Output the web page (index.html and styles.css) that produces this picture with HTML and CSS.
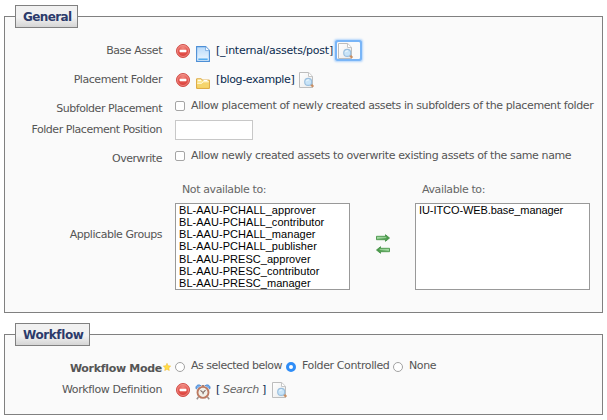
FILE: index.html
```html
<!DOCTYPE html>
<html lang="en">
<head>
<meta charset="utf-8">
<title>Asset Factory</title>
<link rel="stylesheet" href="styles.css">
</head>
<body>
<svg width="0" height="0" class="defs" aria-hidden="true">
  <defs>
    <radialGradient id="red" cx=".5" cy=".25" r=".8"><stop offset="0" stop-color="#f08a80"/><stop offset=".55" stop-color="#e2504a"/><stop offset="1" stop-color="#d3342f"/></radialGradient>
    <linearGradient id="blue" x2="0" y2="1"><stop offset="0" stop-color="#b9dafa"/><stop offset="1" stop-color="#eef8ff"/></linearGradient>
    <linearGradient id="gold" x2="0" y2="1"><stop offset="0" stop-color="#fff4b0"/><stop offset="1" stop-color="#f3c94b"/></linearGradient>
    <linearGradient id="paper" x2="1" y2="1"><stop offset="0" stop-color="#fff"/><stop offset="1" stop-color="#eaeaea"/></linearGradient>
    <linearGradient id="green" x2="1"><stop offset="0" stop-color="#9bd59b"/><stop offset="1" stop-color="#398d3a"/></linearGradient>
    <symbol id="minus" viewBox="0 0 14 14"><circle cx="7" cy="7" r="6.5" fill="url(#red)" stroke="#d0504a"/><circle cx="7" cy="7" r="5.5" fill="none" stroke="#f5a49c" stroke-width=".7"/><rect x="3.6" y="5.7" width="6.8" height="2.5" rx=".4" fill="#fff"/></symbol>
    <symbol id="page" viewBox="0 0 14 16"><path d="M.6.6h9.1l3.7 3.8v11H.6z" fill="url(#blue)" stroke="#4d8fd6" stroke-width="1.1"/><path d="M9.6.8v3.8h3.7" fill="#fff" stroke="#6ba5e0" stroke-width=".8"/><path d="M2.3 13.2h9.4" stroke="#45a5ef" stroke-width="1.4"/></symbol>
    <symbol id="folder" viewBox="0 0 14 12"><path d="M.6 11.4V1.8h4.7l1 1.3h7.1v8.3z" fill="url(#gold)" stroke="#dca63b"/><path d="M1.4 6.5h4.4l1.2-1.7h5.8v6H1.4z" fill="#f5d56c"/><path d="M1.2 6.3h4.6L7 4.8h5.7" fill="none" stroke="#fff9df"/><path d="M2 3.3h3M7.5 3.5h4" stroke="#fff"/></symbol>
    <symbol id="find" viewBox="0 0 16 16"><path d="M.5.5h9.2l3.8 3.8v11.2H.5z" fill="url(#paper)" stroke="#bdbdbd"/><path d="M9.5.7v3.8h3.8" fill="#fff" stroke="#c6c6c6"/><path d="M11.8 12.4l2.5 2.3" stroke="#c98e62" stroke-width="2.2"/><circle cx="9.2" cy="9.9" r="3.5" fill="#c8e4f8" stroke="#9abfde" stroke-width="1.1"/><path d="M7.3 9.3q.8-1.8 2.5-1.4" fill="none" stroke="#f5fcff"/></symbol>
    <symbol id="clock" viewBox="0 0 16 16"><path d="M3.5 13l-1.7 2.3M12.5 13l1.7 2.3" stroke="#99908c" stroke-width="1.5"/><path d="M1.4 5.2C-.2 2 3.2-.3 5.9 1.7M14.6 5.2C16.2 2 12.8-.3 10.1 1.7" fill="#78aeeb" stroke="#4385d3"/><path d="M6.6 1.8h2.8" stroke="#9c796b" stroke-width="1.5"/><circle cx="8" cy="8.4" r="5.5" fill="#f1f0e9" stroke="#bc7960" stroke-width="1.9"/><path d="M5.5 6.4l2.6 2.2 2.4-2.4M8.1 8.6v1.6" fill="none" stroke="#7c665f" stroke-width="1.1"/></symbol>
    <symbol id="arrow" viewBox="0 0 14 8"><path d="M.5 2.3h9V.7L13.5 4 9.5 7.3V5.7h-9z" fill="url(#green)" stroke="#479448" stroke-width=".9"/><path d="M1.3 3.4h9" stroke="#b5e3b0" stroke-width=".7"/></symbol>
    <symbol id="star" viewBox="0 0 8 8"><path d="M4 .3l1.1 2.4 2.6.4-1.9 1.8.5 2.7L4 6.3 1.7 7.6l.5-2.7L.3 3.1l2.6-.4z" fill="#ffdc45" stroke="#efb62d" stroke-width=".5"/></symbol>
  </defs>
</svg>

<fieldset class="panel general">
  <legend>General</legend>
  <div class="row asset">
    <span class="label">Base Asset</span>
    <div class="control">
      <svg class="minus"><use href="#minus"/></svg>
      <svg class="page"><use href="#page"/></svg>
      <span class="path base">[_internal/assets/post]</span>
      <span class="picker focused"><svg class="find"><use href="#find"/></svg></span>
    </div>
  </div>
  <div class="row asset">
    <span class="label">Placement Folder</span>
    <div class="control">
      <svg class="minus"><use href="#minus"/></svg>
      <svg class="folder"><use href="#folder"/></svg>
      <span class="path">[blog-example]</span>
      <span class="picker"><svg class="find"><use href="#find"/></svg></span>
    </div>
  </div>
  <div class="row sub">
    <span class="label">Subfolder Placement</span>
    <label class="control check"><input type="checkbox"><span>Allow placement of newly created assets in subfolders of the placement folder</span></label>
  </div>
  <div class="row position">
    <span class="label">Folder Placement Position</span>
    <div class="control"><input type="text" class="field"></div>
  </div>
  <div class="row overwrite">
    <span class="label">Overwrite</span>
    <label class="control check"><input type="checkbox"><span>Allow newly created assets to overwrite existing assets of the same name</span></label>
  </div>
  <div class="row groups">
    <span class="label">Applicable Groups</span>
    <div class="lists">
      <div class="list">
        <div class="heading">Not available to:</div>
        <ul>
          <li>BL-AAU-PCHALL_approver</li>
          <li>BL-AAU-PCHALL_contributor</li>
          <li>BL-AAU-PCHALL_manager</li>
          <li>BL-AAU-PCHALL_publisher</li>
          <li>BL-AAU-PRESC_approver</li>
          <li>BL-AAU-PRESC_contributor</li>
          <li>BL-AAU-PRESC_manager</li>
        </ul>
      </div>
      <div class="arrows">
        <svg><use href="#arrow"/></svg>
        <svg class="back"><use href="#arrow"/></svg>
      </div>
      <div class="list">
        <div class="heading">Available to:</div>
        <ul class="available"><li>IU-ITCO-WEB.base_manager</li></ul>
      </div>
    </div>
  </div>
</fieldset>

<fieldset class="panel workflow">
  <legend>Workflow</legend>
  <div class="row mode">
    <span class="label strong">Workflow Mode</span>
    <svg class="star"><use href="#star"/></svg>
    <div class="control radios">
      <label class="below"><input type="radio" name="mode"><span>As selected below</span></label>
      <label class="controlled"><input type="radio" name="mode" checked><span>Folder Controlled</span></label>
      <label><input type="radio" name="mode"><span>None</span></label>
    </div>
  </div>
  <div class="row definition">
    <span class="label">Workflow Definition</span>
    <div class="control">
      <svg class="minus"><use href="#minus"/></svg>
      <svg class="clock"><use href="#clock"/></svg>
      <span class="path search">[ <em>Search</em> ]</span>
      <span class="picker"><svg class="find"><use href="#find"/></svg></span>
    </div>
  </div>
</fieldset>
</body>
</html>
```

FILE: styles.css
```css
* { box-sizing: border-box; }
body {
  margin: 0;
  padding: 5px 4px 0;
  background: #fff;
  color: #555;
  font: 11px/14px "DejaVu Sans", Verdana, sans-serif;
  letter-spacing: -.39px;
}
svg { display: block; flex: none; }
.defs { position: absolute; }

.panel {
  width: 599px;
  min-width: 0;
  margin: 0 0 10px;
  padding: 8px 0 0;
  border: 1px solid #808080;
  background: #fafafa;
}
.general { height: 308px; }
.workflow { height: 92px; }
legend {
  height: 23px;
  margin-left: 10px;
  padding: 0 0 0 7px;
  border: 1px solid #808080;
  background: linear-gradient(#f1f1f1 55%, #d5d5d5);
  color: #2c3b6b;
  font-size: 12px;
  font-weight: bold;
  line-height: 22px;
  letter-spacing: -.5px;
  white-space: nowrap;
}
.general legend { width: 63px; letter-spacing: -.6px; }
.workflow legend { width: 75px; letter-spacing: -.4px; }

.row { display: flex; align-items: flex-start; white-space: nowrap; }
.label { width: 157px; margin-right: 13px; text-align: right; letter-spacing: -.45px; flex: none; }
.control { display: flex; align-items: flex-start; }

.asset { height: 29px; padding-top: 7px; }
.asset .label { margin-top: 1px; }
.minus { width: 14px; height: 14px; margin: 1px 6px 0 1px; }
.page { width: 14px; height: 16px; margin: 3px 6px 0 0; }
.folder { width: 14px; height: 12px; margin: 5px 6px 0 0; }
.path { width: 78px; margin-top: 1px; color: #0b2c4f; letter-spacing: -.38px; }
.path.base { width: 117px; letter-spacing: -.24px; }
.picker { margin-left: 5px; }
.find { width: 16px; height: 16px; }
.focused {
  margin: -1px 0 0 4px;
  padding: 1px 6px 0 1px;
  border-radius: 1px;
  box-shadow: 0 0 0 2px #79b5f7, 0 0 2px 3px #b3d5fb;
}

input { margin: 0; flex: none; appearance: none; background: #fff; }
.check input {
  width: 10px;
  height: 10px;
  margin: 2px 6px 0 0;
  border: 1px solid #a5a5a5;
  border-radius: 2px;
}
.sub { height: 26px; padding-top: 5px; }
.sub .label { margin-top: 3px; }
.position { height: 27px; }
.position .label { margin-top: 3px; }
.field { width: 78px; height: 20px; border: 1px solid #c8c8c8; display: block; }
.overwrite { height: 36px; padding-top: 2px; }
.overwrite .label { margin-top: 3px; }

.groups .label { margin-top: 45px; }
.lists { display: flex; }
.list { width: 175px; }
.heading { height: 20px; padding-left: 7px; color: #666; }
ul {
  height: 87px;
  margin: 0;
  padding: 0 0 0 3px;
  border: 1px solid #999;
  background: #fff;
  color: #000;
  font: 11px/12.15px "Liberation Sans", Arial, sans-serif;
  letter-spacing: .04px;
  list-style: none;
}
.available { letter-spacing: -.08px; }
.arrows { width: 14px; margin: 51px 25px 0 26px; }
.arrows svg { width: 14px; height: 8px; margin-bottom: 4px; }
.arrows .back { transform: scaleX(-1); }

.mode { height: 24px; padding-top: 5px; }
.mode .label { margin: 3px 1px 0 0; }
.strong { font-weight: bold; letter-spacing: -.3px; }
.star { width: 8px; height: 8px; margin: 4px 4px 0 0; }
.radios label { display: flex; align-items: flex-start; }
.radios input {
  width: 10px;
  height: 10px;
  margin: 3px 6px 0 0;
  border: 1px solid #a2a2a2;
  border-radius: 50%;
}
.radios input:checked { border: 3px solid #2f8df7; }
.below { width: 111px; letter-spacing: -.48px; }
.controlled { width: 107px; }
.definition { padding-top: 4px; }
.definition .label { margin-top: 1px; letter-spacing: -.38px; }
.clock { width: 16px; height: 16px; margin: 2px 5px 0 -1px; }
.path.search { width: 51px; }
.search em { color: #666; }
```
